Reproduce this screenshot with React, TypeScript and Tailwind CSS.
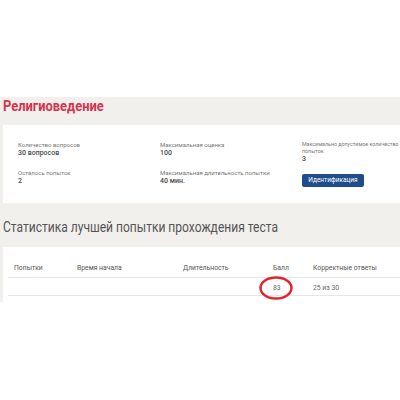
const info = [
  [
    { label: "Количество вопросов", value: "30 вопросов" },
    { label: "Осталось попыток", value: "2" },
  ],
  [
    { label: "Максимальная оценка", value: "100" },
    { label: "Максимальная длительность попытки", value: "40 мин." },
  ],
];

const cols = ["Попытки", "Время начала", "Длительность", "Балл", "Корректные ответы"];

function Field({ label, value }: { label: string; value: string }) {
  return (
    <div className="leading-[8px]">
      <div className="text-[6px] text-[#777]">{label}</div>
      <div className="text-[7px] font-medium text-[#4a4a4a]">{value}</div>
    </div>
  );
}

export default function App() {
  return (
    <div className="w-[400px] h-[400px] bg-white overflow-hidden" style={{ fontFamily: 'Roboto, "Open Sans", sans-serif' }}>
      <div className="h-[97px]" />
      <section className="bg-[#f1f0ed] pl-[3px] h-[205px]">
        <h1 className="h-[17px] pt-[1px] text-[15px] leading-[16px] font-bold text-[#d6334f]">
          <span className="inline-block origin-left scale-x-[0.86] whitespace-nowrap">Религиоведение</span>
        </h1>

        {/* summary card */}
        <div className="mt-[11px] bg-white h-[78px] pl-[15px] pt-[16px] grid grid-cols-[142px_142px_1fr] overflow-hidden">
          {info.map((col, i) => (
            <div key={i} className="flex flex-col gap-[12px]">
              {col.map((f) => (
                <Field key={f.label} {...f} />
              ))}
            </div>
          ))}
          <div className="flex flex-col">
            <div className="leading-[7px] text-[5.3px] text-[#777] whitespace-nowrap">
              Максимально допустимое количество
              <br />
              попыток
            </div>
            <div className="text-[7px] leading-[8px] font-medium text-[#4a4a4a]">3</div>
            <button className="mt-[11px] w-[62px] h-[13px] rounded-[2px] bg-[#1f4d8b] text-white text-[6.5px] leading-none">
              Идентификация
            </button>
          </div>
        </div>

        <h2 className="mt-[16px] h-[18px] text-[14.5px] leading-[18px] text-[#555]">
          <span className="inline-block origin-left scale-x-[0.83] whitespace-nowrap">
            Статистика лучшей попытки прохождения теста
          </span>
        </h2>

        {/* results table */}
        <div className="mt-[10px] bg-white h-[56px] pl-[5px] pt-[16px]">
          <div className="grid grid-cols-[63px_106px_90px_40px_1fr] pl-[6px] h-[15px] border-b border-[#e6e6e6] text-[6.8px] text-[#555] leading-[10px]">
            {cols.map((c) => (
              <div key={c}>{c}</div>
            ))}
          </div>
          <div className="grid grid-cols-[63px_106px_90px_40px_1fr] pl-[6px] h-[18px] pt-[5px] border-b border-[#e6e6e6] text-[6.8px] text-[#666] leading-[10px]">
            <div />
            <div />
            <div />
            <div className="relative">
              83
              <svg className="absolute left-[-14px] top-[-7px]" width="36" height="26" viewBox="0 0 36 26">
                <ellipse cx="17" cy="12" rx="15.5" ry="10.5" fill="none" stroke="#e3232a" strokeWidth="2.4" />
              </svg>
            </div>
            <div>25 из 30</div>
          </div>
        </div>
      </section>
    </div>
  );
}
